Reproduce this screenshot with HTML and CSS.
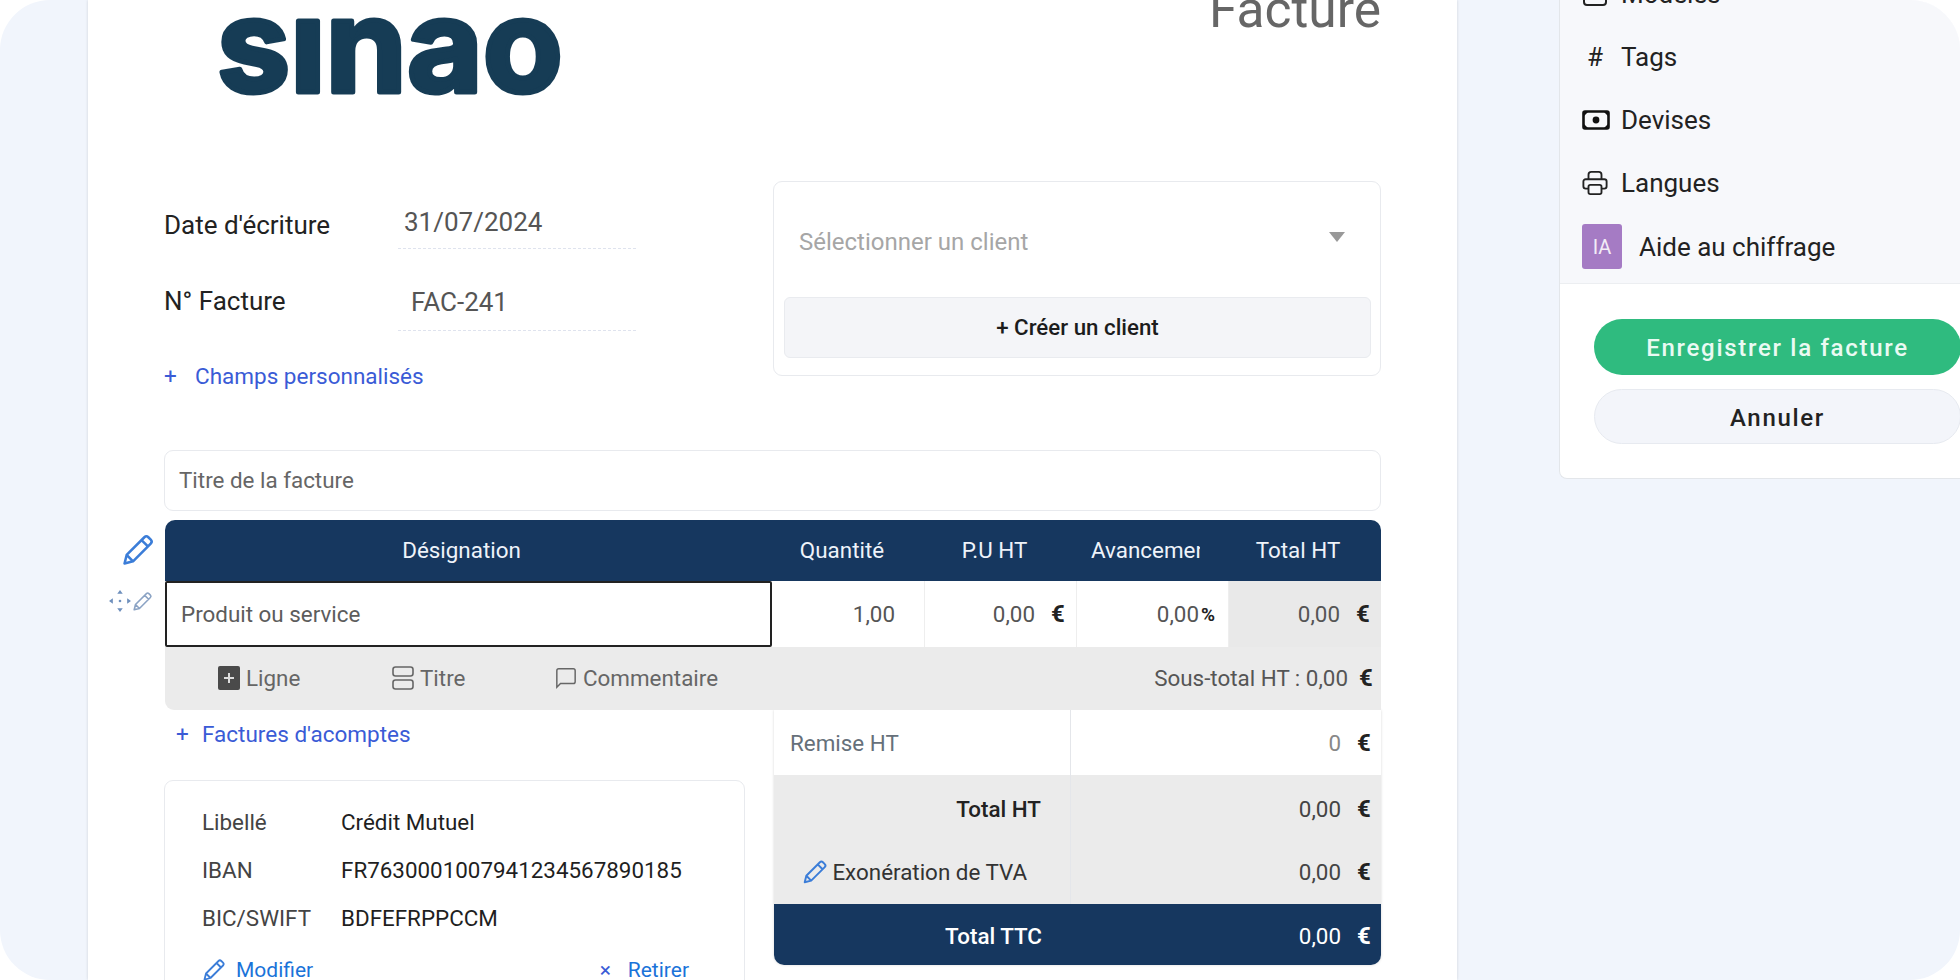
FILE: index.html
```html
<!DOCTYPE html>
<html lang="fr">
<head>
    <meta charset="UTF-8">
    <title>Facture</title>
    <link rel="stylesheet" href="styles.css">
</head>
<body>
    <div class="frame">
        <main class="paper">
            <header class="paper-head">
                <svg class="logo" viewBox="0 0 346 110" aria-label="sinao">
                    <text x="0" y="92" textLength="346" lengthAdjust="spacingAndGlyphs">sınao</text>
                </svg>
                <h1 class="doc-title">Facture</h1>
            </header>

            <section class="info">
                <div class="fields">
                    <div class="field field-date">
                        <span class="field-label">Date d'écriture</span>
                        <span class="field-value">31/07/2024</span>
                    </div>
                    <div class="field field-num">
                        <span class="field-label">N° Facture</span>
                        <span class="field-value">FAC-241</span>
                    </div>
                    <a class="link-add"><span class="plus">+</span>Champs personnalisés</a>
                </div>
                <div class="client-box">
                    <div class="client-select">
                        <span>Sélectionner un client</span>
                        <i class="caret"></i>
                    </div>
                    <button class="client-btn">+ Créer un client</button>
                </div>
            </section>

            <div class="title-input">Titre de la facture</div>

            <section class="table-wrap">
                <svg class="icon pencil gutter-pencil" viewBox="0 0 24 24"><use href="#pencil"/></svg>
                <div class="gutter-tools">
                    <svg class="move" viewBox="0 0 20 20">
                        <path d="M10 0l2.500 3.500h-5zM10 20l-2.500-3.500h5zM0 10l3.500-2.500v5zM20 10l-3.500 2.500v-5z"/>
                        <circle cx="10" cy="10" r="1.200"/>
                    </svg>
                    <svg class="icon pencil-small" viewBox="0 0 24 24"><use href="#pencil"/></svg>
                </div>

                <div class="table-head">
                    <div>Désignation</div>
                    <div>Quantité</div>
                    <div>P.U HT</div>
                    <div class="clip">Avancement</div>
                    <div>Total HT</div>
                </div>
                <div class="table-row">
                    <div class="cell-name">Produit ou service</div>
                    <div class="cell-qty">1,00</div>
                    <div class="cell-num">0,00<b>€</b></div>
                    <div class="cell-num cell-pct">0,00<b>%</b></div>
                    <div class="cell-num cell-total">0,00<b>€</b></div>
                </div>
                <div class="table-tools">
                    <div class="tool tool-line">
                        <svg viewBox="0 0 22 24"><rect width="22" height="24" rx="2" fill="#4a4a4a"/><path d="M11 7v10M6 12h10" stroke="#ddd" stroke-width="2"/></svg>
                        Ligne
                    </div>
                    <div class="tool tool-title">
                        <svg viewBox="0 0 22 24" fill="none" stroke="#666" stroke-width="1.6"><rect x="1" y="1" width="20" height="9" rx="2.5"/><rect x="1" y="14" width="20" height="9" rx="2.5"/></svg>
                        Titre
                    </div>
                    <div class="tool tool-comment">
                        <svg viewBox="0 0 24 24" fill="none" stroke="#666" stroke-width="1.6"><path d="M2 22V4a2 2 0 0 1 2-2h16a2 2 0 0 1 2 2v12a2 2 0 0 1-2 2H6z"/></svg>
                        Commentaire
                    </div>
                    <div class="subtotal">Sous-total HT : 0,00<b>€</b></div>
                </div>
            </section>

            <section class="bottom">
                <div class="bottom-left">
                    <a class="link-add link-deposit"><span class="plus">+</span>Factures d'acomptes</a>
                    <div class="bank">
                        <div class="bank-grid">
                            <span>Libellé</span><span class="bank-val">Crédit Mutuel</span>
                            <span>IBAN</span><span class="bank-val">FR7630001007941234567890185</span>
                            <span>BIC/SWIFT</span><span class="bank-val">BDFEFRPPCCM</span>
                        </div>
                        <div class="bank-actions">
                            <a><svg class="icon" viewBox="0 0 24 24"><use href="#pencil"/></svg>Modifier</a>
                            <a class="bank-remove"><span class="times">×</span>Retirer</a>
                        </div>
                    </div>
                </div>
                <div class="totals">
                    <div class="tot-row tot-white">
                        <div class="tot-label tot-remise">Remise HT</div>
                        <div class="tot-val tot-muted">0<b>€</b></div>
                    </div>
                    <div class="tot-row">
                        <div class="tot-label tot-strong">Total HT</div>
                        <div class="tot-val">0,00<b>€</b></div>
                    </div>
                    <div class="tot-row tot-row-exo">
                        <div class="tot-label tot-exo"><svg class="icon" viewBox="0 0 24 24"><use href="#pencil"/></svg>Exonération de TVA</div>
                        <div class="tot-val">0,00<b>€</b></div>
                    </div>
                    <div class="tot-row tot-navy">
                        <div class="tot-label tot-strong">Total TTC</div>
                        <div class="tot-val">0,00<b>€</b></div>
                    </div>
                </div>
            </section>
        </main>

        <aside class="side">
            <nav class="side-menu">
                <div class="side-item">
                    <svg viewBox="0 0 26 26" fill="none" stroke="#222" stroke-width="2"><rect x="2" y="2" width="22" height="22" rx="3"/></svg>
                    Modèles
                </div>
                <div class="side-item"><span class="hash">#</span>Tags</div>
                <div class="side-item">
                    <svg class="note" viewBox="0 0 28 20"><rect x="1.500" y="1.500" width="25" height="17" rx="1.500" fill="none" stroke="#111" stroke-width="2.6"/><path d="M1 1h6L1 7zM27 1v6l-6-6zM1 19v-6l6 6zM27 19h-6l6-6z" fill="#111"/><circle cx="14" cy="10" r="3.400" fill="#111"/></svg>
                    Devises
                </div>
                <div class="side-item">
                    <svg viewBox="0 0 28 28" fill="none" stroke="#222" stroke-width="2"><path d="M7 10V5a3 3 0 0 1 3-3h8a3 3 0 0 1 3 3v5"/><path d="M7 20H4a2.500 2.500 0 0 1-2.500-2.500v-5A2.500 2.500 0 0 1 4 10h20a2.500 2.500 0 0 1 2.500 2.500v5A2.500 2.500 0 0 1 24 20h-3"/><rect x="7" y="16" width="14" height="10" rx="2"/></svg>
                    Langues
                </div>
                <div class="side-item side-ai"><span class="ai-badge">IA</span>Aide au chiffrage</div>
            </nav>
            <div class="side-actions">
                <button class="btn-save">Enregistrer la facture</button>
                <button class="btn-cancel">Annuler</button>
            </div>
        </aside>
    </div>

    <svg class="defs" width="0" height="0">
        <symbol id="pencil" viewBox="0 0 24 24">
            <path d="M4 15.500 16.500 3a2 2 0 0 1 2.800 0l1.700 1.700a2 2 0 0 1 0 2.800L8.500 20 2.500 21.500zM14.500 5l4.500 4.500M4 15.500 8.500 20" fill="none" stroke="currentColor" stroke-width="1.800" stroke-linejoin="round"/>
        </symbol>
    </svg>
</body>
</html>
```

FILE: styles.css
```css
* {
    box-sizing: border-box;
}
html, body {
    margin: 0;
    padding: 0;
    background: #fff;
}
body {
    font-family: Roboto, "Liberation Sans", sans-serif;
    font-size: 22.4px;
    color: #222;
}
a {
    text-decoration: none;
}
button {
    font-family: inherit;
    cursor: pointer;
}
.defs {
    display: block;
    height: 0;
}
.frame {
    display: flex;
    align-items: flex-start;
    width: 1960px;
    height: 980px;
    overflow: hidden;
    background: #f1f5fc;
    border-radius: 50px;
}
.icon {
    color: #3b7dd8;
}

/* paper */
.paper {
    flex: none;
    width: 1369px;
    height: 980px;
    margin-left: 88px;
    padding: 0 76px;
    overflow: hidden;
    background: #fff;
    box-shadow: 0 0 3px rgba(0, 0, 0, .14);
}
.paper-head {
    display: flex;
    justify-content: space-between;
    align-items: flex-start;
    height: 181px;
}
.logo {
    width: 346px;
    height: 110px;
    margin-left: 53px;
    overflow: visible;
}
.logo text {
    font-family: Inter, sans-serif;
    font-weight: 700;
    font-size: 130px;
    fill: #163c55;
    stroke: #163c55;
    stroke-width: 5px;
    stroke-linejoin: round;
}
.doc-title {
    margin: -20px 0 0;
    font-size: 51.5px;
    line-height: 60px;
    font-weight: 400;
    color: #666;
}

/* date, number, client */
.info {
    display: flex;
    justify-content: space-between;
    height: 195px;
}
.fields {
    width: 472px;
}
.field {
    display: flex;
    align-items: center;
    font-size: 26px;
}
.field-date {
    height: 68px;
}
.field-num {
    height: 82px;
}
.field-label {
    width: 234px;
}
.field-value {
    display: flex;
    width: 238px;
    color: #555;
    border-bottom: 1.500px dashed #dfe3ee;
}
.field-date .field-value {
    height: 68px;
    align-items: flex-end;
    padding: 0 0 11px 6px;
}
.field-date .field-label {
    padding-top: 20px;
}
.field-num .field-value {
    height: 82px;
    align-items: center;
    padding: 25px 0 0 13px;
}
.field-num .field-label {
    padding-top: 21px;
}
.link-add {
    display: flex;
    align-items: center;
    font-size: 22.5px;
    color: #3a5bd6;
}
.plus {
    width: 31px;
}
.fields .link-add {
    margin-top: 32px;
}
.client-box {
    width: 608px;
    padding: 0 9px 0 10px;
    background: #fff;
    border: 1.500px solid #e8eaee;
    border-radius: 9px;
}
.client-select {
    display: flex;
    justify-content: space-between;
    height: 115px;
    padding: 46px 26px 0 15px;
    font-size: 24px;
    color: #a6a6a6;
}
.caret {
    width: 0;
    height: 0;
    margin-top: 4px;
    border: 8.5px solid transparent;
    border-top: 10px solid #999;
    border-bottom: 0;
}
.client-btn {
    display: block;
    width: 100%;
    height: 61px;
    padding-bottom: 3px;
    background: #f4f5f8;
    border: 1.500px solid #e9ebef;
    border-radius: 6px;
    font-size: 22.3px;
    font-weight: 500;
    color: #1c1c1c;
}

.title-input {
    display: flex;
    align-items: center;
    height: 61px;
    margin-top: 74px;
    padding: 0 0 2px 14px;
    background: #fff;
    border: 1.500px solid #e8eaee;
    border-radius: 9px;
    color: #666;
}

/* lines table */
.table-wrap {
    position: relative;
    margin: 9px 0 0 1px;
}
.gutter-pencil {
    position: absolute;
    left: -44px;
    top: 13px;
    width: 34px;
    height: 34px;
}
.gutter-tools {
    position: absolute;
    left: -56px;
    top: 70px;
    display: flex;
    align-items: center;
    gap: 1px;
}
.move {
    width: 22px;
    height: 22px;
    fill: #6f90bd;
}
.pencil-small {
    width: 21px;
    height: 21px;
    color: #8ba3c4;
}
.table-head,
.table-row {
    display: grid;
    grid-template-columns: 607px 153px 152px 152px 152px;
}
.table-head {
    height: 61px;
    padding-bottom: 2px;
    align-items: center;
    background: #16375f;
    color: #eef3fa;
    border-radius: 10px 10px 0 0;
    text-align: center;
}
.table-head > div:first-child {
    padding-right: 14px;
}
.table-head > div:nth-child(2),
.table-head > div:nth-child(3) {
    padding-right: 13px;
}
.table-head .clip {
    width: 109px;
    margin-left: 14px;
    overflow: hidden;
    white-space: nowrap;
    text-align: left;
}
.table-head > div:last-child {
    padding-right: 14px;
}
.table-row {
    height: 66px;
}
.table-row > div {
    display: flex;
    align-items: center;
    justify-content: flex-end;
    color: #555;
    border-right: 1.500px solid #eee;
}
.table-row .cell-name {
    justify-content: flex-start;
    padding-left: 14px;
    border: 2px solid #222;
    border-radius: 2px;
    color: #5c5c5c;
}
.table-row .cell-qty {
    padding-right: 29px;
}
.cell-num {
    padding-right: 11px;
}
.cell-num b,
.subtotal b,
.tot-val b {
    width: 14px;
    margin-left: 16px;
    font-size: 24px;
    color: #222;
}
.table-row .cell-pct {
    padding-right: 11px;
}
.cell-pct b {
    margin-left: 2px;
    width: 16px;
    font-size: 19px;
}
.table-row .cell-total {
    background: #e9e9e9;
    border: 0;
}
.table-tools {
    display: flex;
    align-items: center;
    height: 63px;
    padding: 0 0 2px 53px;
    background: #ebebeb;
    border-radius: 0 0 0 9px;
    color: #666;
}
.tool {
    display: flex;
    align-items: center;
    gap: 6px;
}
.tool svg {
    width: 22px;
    height: 24px;
}
.tool-line {
    width: 174px;
}
.tool-title {
    width: 163px;
}
.subtotal {
    display: flex;
    align-items: center;
    margin-left: auto;
    padding-right: 8px;
    color: #555;
}
.subtotal b {
    margin-left: 11px;
}

/* bottom blocks */
.bottom {
    display: flex;
    justify-content: space-between;
}
.bottom-left {
    width: 581px;
}
.link-deposit {
    height: 48px;
    margin-bottom: 22px;
    padding-left: 12px;
}
.link-deposit .plus {
    width: 26px;
}
.bank {
    height: 260px;
    padding: 28px 37px;
    border: 1.500px solid #e8eaee;
    border-radius: 9px;
}
.bank-grid {
    display: grid;
    grid-template-columns: 139px 1fr;
    row-gap: 21px;
    color: #444;
}
.bank-grid span {
    line-height: 27px;
}
.bank-grid .bank-val {
    color: #1f1f1f;
}
.bank-actions {
    display: flex;
    justify-content: space-between;
    margin-top: 26px;
    padding-right: 18px;
    font-size: 21px;
    color: #1a73d9;
}
.bank-actions a {
    display: flex;
    align-items: center;
}
.bank-actions .icon {
    width: 24px;
    height: 24px;
    margin-right: 10px;
}
.times {
    width: 28px;
    color: #3a5bd6;
}
.totals {
    width: 607px;
    height: 255px;
    overflow: hidden;
    border-radius: 0 0 10px 10px;
    box-shadow: 0 0 3px rgba(0, 0, 0, .16);
}
.tot-row {
    display: grid;
    grid-template-columns: 297px 1fr;
    height: 64px;
    background: #ebebeb;
}
.tot-row > div {
    display: flex;
    align-items: center;
    padding-top: 3px;
}
.tot-label {
    justify-content: flex-end;
    padding-right: 29px;
    border-right: 1.500px solid #e4e6ea;
}
.tot-val {
    justify-content: flex-end;
    padding-right: 10px;
    color: #444;
}
.tot-white {
    height: 65px;
    background: #fff;
}
.tot-white > div {
    padding-top: 0;
}
.tot-white .tot-remise {
    justify-content: flex-start;
    padding: 0 0 0 16px;
    color: #66707a;
}
.tot-muted {
    color: #888;
}
.tot-strong {
    font-weight: 500;
    color: #222;
}
.tot-row-exo {
    height: 65px;
}
.tot-row-exo > div {
    padding-top: 1px;
}
.tot-exo {
    padding-right: 43px;
    color: #333;
}
.tot-exo .icon {
    width: 26px;
    height: 26px;
    margin-right: 4px;
}
.tot-navy {
    height: 61px;
    background: #16375f;
}
.tot-navy .tot-label {
    border: 0;
    color: #fff;
}
.tot-navy .tot-val,
.tot-navy .tot-val b {
    color: #fff;
}

/* right panel */
.side {
    flex: none;
    width: 401px;
    margin-left: 102px;
    background: #fff;
    border: 1.500px solid #e3e6ea;
    border-width: 0 0 1.500px 1.500px;
    border-radius: 0 0 0 8px;
    font-size: 26px;
}
.side-menu {
    height: 284px;
    padding: 1px 0 0 22px;
    background: #f7f8fb;
    border-bottom: 1.500px solid #eceef1;
}
.side-item {
    display: flex;
    align-items: center;
    gap: 13px;
    height: 63px;
}
.side-item:first-child {
    margin-top: -39px;
}
.side-item svg {
    width: 26px;
    height: 26px;
}
.side-item .note {
    width: 28px;
    margin-right: -2px;
}
.hash {
    width: 26px;
    text-align: center;
}
.side-ai {
    gap: 17px;
    margin-top: 1px;
}
.ai-badge {
    display: flex;
    align-items: center;
    justify-content: center;
    width: 40px;
    height: 45px;
    background: #a57bc4;
    border-radius: 3px;
    font-size: 20px;
    color: #f2ecf6;
}
.side-actions {
    display: flex;
    flex-direction: column;
    gap: 14px;
    height: 194px;
    padding: 35px 0 0 34px;
}
.btn-save,
.btn-cancel {
    width: 367px;
    height: 56px;
    padding-top: 2px;
    border-radius: 28px;
    font-size: 24px;
    font-weight: 500;
    letter-spacing: 1.700px;
}
.btn-save {
    background: #2fbb7f;
    border: 0;
    color: #eafaf3;
}
.btn-cancel {
    height: 55px;
    padding-top: 4px;
    background: #f3f5fa;
    border: 1.500px solid #e7eaf0;
    color: #222;
}
```
